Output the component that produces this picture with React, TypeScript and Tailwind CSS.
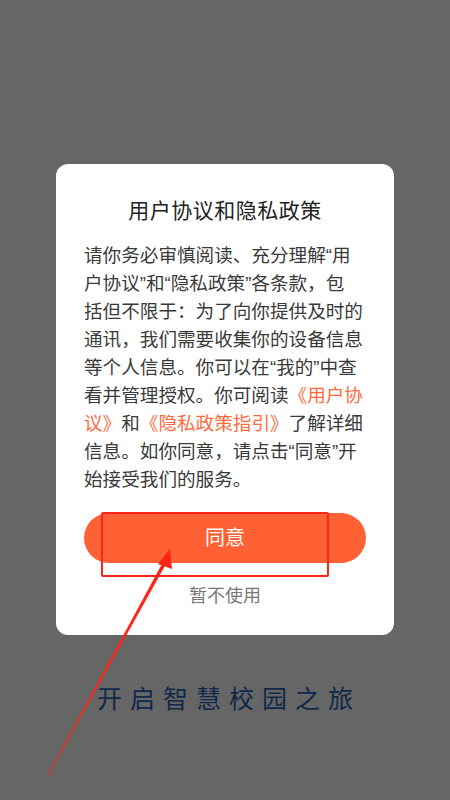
import React from 'react';

const bodyLines: React.ReactNode[] = [
  '请你务必审慎阅读、充分理解“用',
  '户协议”和“隐私政策”各条款，包',
  '括但不限于：为了向你提供及时的',
  '通讯，我们需要收集你的设备信息',
  '等个人信息。你可以在“我的”中查',
  <>看并管理授权。你可阅读<span className="text-[#ff6a3d]">《用户协</span></>,
  <><span className="text-[#ff6a3d]">议》</span>和<span className="text-[#ff6a3d]">《隐私政策指引》</span>了解详细</>,
  '信息。如你同意，请点击“同意”开',
  '始接受我们的服务。',
];

export default function App() {
  return (
    <div
      className="relative w-[450px] h-[800px] bg-[#666666] flex flex-col overflow-hidden"
      style={{ fontFamily: '"Liberation Sans", "Noto Sans CJK SC", sans-serif' }}
    >
      {/* dialog */}
      <div className="mt-[164px] mx-[56px] bg-white rounded-[12px] px-[28px] pt-[32px] pb-[25px] flex flex-col">
        <h2 className="text-center text-[21px] leading-[30px] tracking-[0.5px] text-[#222]">用户协议和隐私政策</h2>
        <div className="mt-[16px] text-[18.6px] leading-[28px] text-[#3a3a3a] whitespace-nowrap">
          {bodyLines.map((l, i) => (
            <div key={i}>{l}</div>
          ))}
        </div>
        <button className="mt-[19px] h-[50px] rounded-full bg-[#ff6034] text-white text-[20px]">同意</button>
        <div className="mt-[19px] text-center text-[18px] leading-[28px] text-[#777]">暂不使用</div>
      </div>

      <div
        className="mt-[44px] text-center text-[25px] tracking-[8px] pl-[8px] text-[#10294a]"
        style={{ fontFamily: '"Noto Sans CJK SC", sans-serif' }}
      >
        开启智慧校园之旅
      </div>

      {/* annotation box */}
      <div className="absolute left-[101px] top-[512px] w-[228px] h-[65px] border-2 border-[#ff2418] rounded-[2px]" />

      {/* annotation arrow */}
      <svg className="absolute left-0 top-0" width="450" height="800" viewBox="0 0 450 800">
        <polygon points="47,776 163,562 166,564 48,776" fill="#ff2418" />
        <polygon points="170,549 158,564 172,569" fill="#ff2418" />
      </svg>
    </div>
  );
}
